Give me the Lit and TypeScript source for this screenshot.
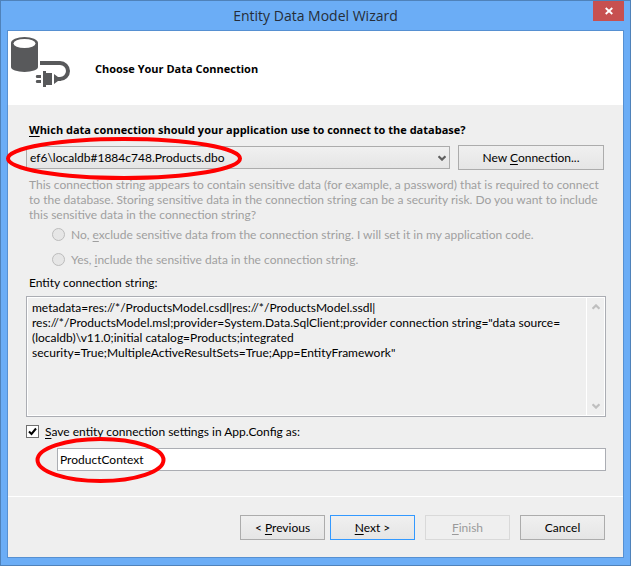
import { LitElement, html, css } from "lit";
import { customElement } from "lit/decorators.js";

const CONNECTION = [
  "metadata=res://*/ProductsModel.csdl|res://*/ProductsModel.ssdl|",
  "res://*/ProductsModel.msl;provider=System.Data.SqlClient;provider connection string=\"data source=",
  "(localdb)\\v11.0;initial catalog=Products;integrated",
  "security=True;MultipleActiveResultSets=True;App=EntityFramework\"",
].join("\n");

@customElement("app-root")
export class AppRoot extends LitElement {
  static styles = css`
    :host {
      display: block;
      font: 12px/15px Lato, "Open Sans", sans-serif;
      color: #000;
    }
    * { box-sizing: border-box; }
    .window {
      display: flex;
      flex-direction: column;
      min-height: 100vh;
      padding: 0 6px 7px;
      background: #6badf6;
      border: 1px solid #4f82ba;
    }
    .titlebar {
      display: grid;
      grid-template-columns: 31px 1fr 31px;
      height: 29px;
    }
    .title {
      margin: 0;
      padding-top: 5px;
      font: 400 14px/20px "Open Sans", sans-serif;
      text-align: center;
      color: #262d38;
    }
    .close {
      grid-column: 3;
      display: grid;
      place-items: center;
      height: 20px;
      padding: 0;
      border: 0;
      background: #c75050;
    }
    .close svg { display: block; }
    .client {
      flex: 1;
      display: flex;
      flex-direction: column;
      background: #efefef;
      border: 1px solid #5690d2;
    }
    .header {
      display: flex;
      height: 74px;
      background: #fff;
    }
    .header svg { width: 87px; height: 74px; flex: none; }
    .header h2 {
      margin: 0;
      padding-top: 30px;
      font: 700 11px/15px "Open Sans", sans-serif;
    }
    .body {
      display: flex;
      flex-direction: column;
      padding: 17px 17px 25px 18px;
    }
    .question { padding-left: 3px; font: 700 11px/15px "Open Sans", sans-serif; }
    .row {
      display: flex;
      align-items: center;
      gap: 8px;
      margin: 8px 2px 7px 0;
    }
    .pick { position: relative; flex: 1; }
    select, textarea, input, button { font: inherit; color: inherit; }
    select {
      display: block;
      appearance: none;
      width: 100%;
      height: 23px;
      padding: 0 20px 0 3px;
      border: 1px solid #acacac;
      border-radius: 0;
      background: linear-gradient(#f0f0f0, #e5e5e5);
    }
    .chevron { position: absolute; right: 4px; top: 9px; pointer-events: none; }
    .ring { position: absolute; pointer-events: none; overflow: visible; }
    .ring ellipse { fill: none; stroke: #f00; stroke-width: 4; }
    .ring-pick { left: -21px; top: -9px; }
    .ring-name { left: -22px; top: -11px; }
    .btn {
      width: 85px;
      height: 25px;
      padding: 0;
      border: 1px solid #acacac;
      background: linear-gradient(#f0f0f0, #e5e5e5);
      text-align: center;
    }
    .btn.wide { width: 146px; }
    .btn.default { border-color: #3399ff; }
    .btn:disabled { border-color: #d9d9d9; background: #efefef; color: #9a9a9a; }
    .sensitive { color: #9f9f9f; }
    .sensitive p { margin: 0 0 5px; padding-left: 3px; }
    .option {
      display: flex;
      align-items: center;
      gap: 6px;
      margin-bottom: 10px;
      padding-left: 26px;
    }
    .option:last-child { margin-bottom: 8px; }
    .option input {
      appearance: none;
      width: 13px;
      height: 13px;
      margin: 0;
      border: 1px solid #bcbcbc;
      border-radius: 50%;
      background: #e6e6e6;
    }
    .caption { margin-bottom: 6px; padding: 0 3px; }
    .memo {
      display: flex;
      height: 121px;
      padding: 1px;
      border: 1px solid #abadb3;
      background: #fff;
    }
    .memo textarea {
      flex: 1;
      min-width: 0;
      padding: 2px 4px;
      border: 0;
      background: #efefef;
      resize: none;
      outline: 0;
      overflow: hidden;
      white-space: pre;
    }
    .scroll {
      display: flex;
      flex-direction: column;
      justify-content: space-between;
      align-items: center;
      width: 17px;
      margin-left: 1px;
      padding: 6px 0;
      background: #efefef;
    }
    .save {
      display: flex;
      align-items: center;
      gap: 6px;
      margin: 7px 0 9px;
    }
    .tick { display: grid; }
    .tick > * { grid-area: 1 / 1; }
    .tick input {
      appearance: none;
      width: 13px;
      height: 13px;
      margin: 0;
      border: 1px solid #707070;
      background: #fff;
    }
    .tick svg { pointer-events: none; }
    .name { position: relative; margin-left: 31px; }
    .name input {
      display: block;
      width: 100%;
      height: 23px;
      padding: 0 2px;
      border: 1px solid #abadb3;
      background: #fff;
      outline: 0;
    }
    .footer {
      flex: 1;
      display: flex;
      justify-content: flex-end;
      align-items: flex-start;
      gap: 10px;
      padding: 18px 18px 16px;
      border-top: 1px solid #fff;
    }
    .pair { display: flex; gap: 5px; }
    u { text-underline-offset: 2px; text-decoration-skip-ink: none; }
  `;

  private chevron(cls: string, color: string, up = false) {
    return html`<svg class=${cls} width="8" height="6" viewBox="0 0 8 6" aria-hidden="true">
      <path d=${up ? "M0.5 4.8 4 1.4 7.5 4.8" : "M0.5 1.2 4 4.6 7.5 1.2"} fill="none" stroke=${color} stroke-width="2.2" />
    </svg>`;
  }

  render() {
    return html`
      <div class="window">
        <div class="titlebar">
          <span></span>
          <h1 class="title">Entity Data Model Wizard</h1>
          <button class="close" aria-label="Close">
            <svg width="8" height="8" viewBox="0 0 8 8"><path d="M0.7 1 7.3 7M7.3 1 0.7 7" stroke="#fff" stroke-width="1.8" /></svg>
          </button>
        </div>
        <div class="client">
          <div class="header">
            <svg viewBox="0 0 87 74" aria-hidden="true">
              <path d="M3 12A13.500 6 0 0 1 30 12V36A13.500 5 0 0 1 3 36Z" fill="#58595b" />
              <ellipse cx="16.500" cy="12.500" rx="11" ry="4.500" fill="#fff" />
              <path d="M32 32H52A8 8 0 0 1 52 48H49" fill="none" stroke="#58595b" stroke-width="4" />
              <path d="M46 43 50 46H53V50H50L46 53ZM35 40H38V42H44V54H38V56H35ZM28.500 44H33V47H28.500Q27 45.500 28.500 44ZM28.500 49H33V52H28.500Q27 50.500 28.500 49Z" fill="#58595b" />
            </svg>
            <h2>Choose Your Data Connection</h2>
          </div>
          <div class="body">
            <label class="question" for="connection"><u>W</u>hich data connection should your application use to connect to the database?</label>
            <div class="row">
              <div class="pick">
                <select id="connection"><option>ef6\\localdb#1884c748.Products.dbo</option></select>
                ${this.chevron("chevron", "#606060")}
                <svg class="ring ring-pick" width="238" height="43"><ellipse cx="119" cy="21.500" rx="116" ry="19.500" /></svg>
              </div>
              <button class="btn wide">New <u>C</u>onnection...</button>
            </div>
            <div class="sensitive">
              <p>This connection string appears to contain sensitive data (for example, a password) that is required to connect<br />to the database. Storing sensitive data in the connection string can be a security risk. Do you want to include<br />this sensitive data in the connection string?</p>
              <label class="option"><input type="radio" name="mode" disabled /><span>No, <u>e</u>xclude sensitive data from the connection string. I will set it in my application code.</span></label>
              <label class="option"><input type="radio" name="mode" disabled /><span>Yes, <u>i</u>nclude the sensitive data in the connection string.</span></label>
            </div>
            <label class="caption" for="memo">Entity connection string:</label>
            <div class="memo">
              <textarea id="memo" readonly .value=${CONNECTION}></textarea>
              <div class="scroll">${this.chevron("", "#bfbfbf", true)}${this.chevron("", "#bfbfbf")}</div>
            </div>
            <label class="save">
              <span class="tick">
                <input type="checkbox" checked />
                <svg width="13" height="13" viewBox="0 0 13 13"><path d="M3 6.500 5.500 9 10 3.500" fill="none" stroke="#000" stroke-width="2" /></svg>
              </span>
              <span><u>S</u>ave entity connection settings in App.Config as:</span>
            </label>
            <div class="name">
              <input type="text" aria-label="Connection settings name" value="ProductContext" />
              <svg class="ring ring-name" width="131" height="46"><ellipse cx="65.500" cy="23" rx="63" ry="21" /></svg>
            </div>
          </div>
          <div class="footer">
            <div class="pair">
              <button class="btn">&lt; <u>P</u>revious</button>
              <button class="btn default"><u>N</u>ext &gt;</button>
            </div>
            <button class="btn" disabled><u>F</u>inish</button>
            <button class="btn">Cancel</button>
          </div>
        </div>
      </div>
    `;
  }
}
